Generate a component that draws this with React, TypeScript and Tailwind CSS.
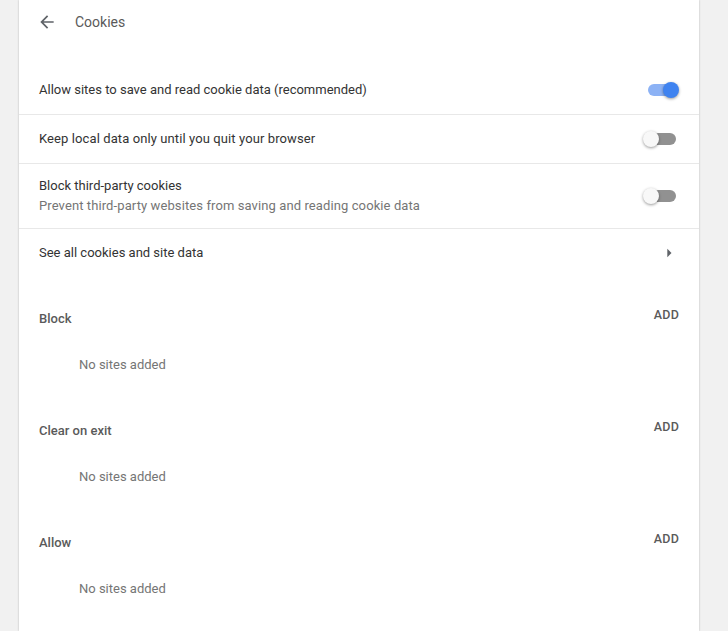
import { useState } from 'react'

function Toggle({ on, onClick }: { on: boolean; onClick: () => void }) {
  return (
    <button onClick={onClick} className="relative w-[36px] h-[16px] shrink-0">
      <span
        className={
          'absolute left-[5px] top-[2px] w-[28px] h-[12px] rounded-full ' +
          (on ? 'bg-[#8cb2f5]' : 'bg-[#919191]')
        }
      />
      <span
        className={
          'absolute top-0 w-[16px] h-[16px] rounded-full shadow-[0_1px_3px_rgba(0,0,0,0.4)] ' +
          (on ? 'left-[20px] bg-[#3f83f0]' : 'left-0 bg-[#f8f8f8]')
        }
      />
    </button>
  )
}

function SiteList({ title }: { title: string }) {
  return (
    <div className="h-[112px] pt-[33px] px-5">
      <div className="flex items-center justify-between h-[18px]">
        <span className="text-[13px] font-medium text-[#5a5a5a]">{title}</span>
        <button className="mb-2 text-[12.5px] font-medium text-[#5a5a5a] tracking-[0.2px]">ADD</button>
      </div>
      <div className="mt-[28px] h-[18px] leading-[18px] pl-10 text-[13px] text-[#757575]">No sites added</div>
    </div>
  )
}

export default function App() {
  const [allow, setAllow] = useState(true)
  const [keepLocal, setKeepLocal] = useState(false)
  const [blockThird, setBlockThird] = useState(false)

  return (
    <div className="min-h-screen bg-[#f1f1f1] font-['Roboto','Liberation_Sans',sans-serif]">
      <div className="ml-[19px] w-[680px] min-h-[631px] bg-white shadow-[0_0_2px_rgba(0,0,0,0.25)]">
        <div className="h-[44px] flex items-center pl-[18px]">
          <svg width="20" height="20" viewBox="0 0 24 24" className="fill-[#5f6368]">
            <path d="M20 11H7.83l5.59-5.59L12 4l-8 8 8 8 1.41-1.41L7.83 13H20v-2z" />
          </svg>
          <span className="ml-[18px] text-[14px] text-[#5a5a5a]">Cookies</span>
        </div>

        <div className="mt-[22px] text-[13px] text-[#333]">
          <div className="h-[49px] flex items-center justify-between px-5 border-b border-[#e8e8e8]">
            <span>Allow sites to save and read cookie data (recommended)</span>
            <Toggle on={allow} onClick={() => setAllow(!allow)} />
          </div>
          <div className="h-[49px] flex items-center justify-between px-5 border-b border-[#e8e8e8]">
            <span className="tracking-[0.1px]">Keep local data only until you quit your browser</span>
            <Toggle on={keepLocal} onClick={() => setKeepLocal(!keepLocal)} />
          </div>
          <div className="h-[65px] flex items-center justify-between px-5 border-b border-[#e8e8e8]">
            <div className="leading-[20px]">
              <div>Block third-party cookies</div>
              <div className="text-[#757575] tracking-[0.1px]">Prevent third-party websites from saving and reading cookie data</div>
            </div>
            <Toggle on={blockThird} onClick={() => setBlockThird(!blockThird)} />
          </div>
          <div className="h-[48px] flex items-center justify-between pl-5 pr-5">
            <span>See all cookies and site data</span>
            <svg width="20" height="20" viewBox="0 0 24 24" className="fill-[#5f6368]">
              <path d="M10 17l5-5-5-5v10z" />
            </svg>
          </div>
        </div>

        <SiteList title="Block" />
        <SiteList title="Clear on exit" />
        <SiteList title="Allow" />
      </div>
    </div>
  )
}
